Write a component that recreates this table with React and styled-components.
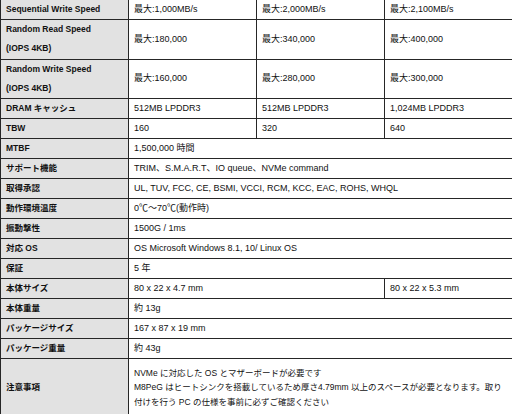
import styled, { createGlobalStyle } from 'styled-components';

const GlobalStyle = createGlobalStyle`
  html, body {
    margin: 0;
    padding: 0;
    background: #ffffff;
  }
  body {
    font-family: 'Liberation Sans', 'Noto Sans CJK JP', sans-serif;
    color: #111111;
  }
`;

const Page = styled.div`
  width: 512px;
  overflow: hidden;
`;

const Table = styled.table`
  width: 512px;
  margin-top: -1px;
  border-collapse: collapse;
  table-layout: fixed;
`;

const Row = styled.tr`
  height: ${(p) => p.$h || 19.8}px;
`;

const Label = styled.th`
  width: 128px;
  padding: 0 5px;
  background: #e2e2e2;
  border: 1px solid #262626;
  text-align: left;
  vertical-align: middle;
  font-size: 8.5px;
  font-weight: 700;
  line-height: 19px;
  white-space: nowrap;
`;

const Cell = styled.td`
  padding: 0 5px;
  border: 1px solid #262626;
  vertical-align: middle;
  font-size: ${(p) => (p.$dense ? '8.5px' : '9px')};
  line-height: ${(p) => (p.$dense ? '14.5px' : '19px')};
  white-space: nowrap;
`;

const Line = styled.div``;

const speeds = [
  { label: ['Sequential Write Speed'], vals: ['最大:1,000MB/s', '最大:2,000MB/s', '最大:2,100MB/s'], h: 20 },
  { label: ['Random Read Speed', '(IOPS 4KB)'], vals: ['最大:180,000', '最大:340,000', '最大:400,000'], h: 39.5 },
  { label: ['Random Write Speed', '(IOPS 4KB)'], vals: ['最大:160,000', '最大:280,000', '最大:300,000'], h: 39.5 },
  { label: ['DRAM キャッシュ'], vals: ['512MB LPDDR3', '512MB LPDDR3', '1,024MB LPDDR3'] },
  { label: ['TBW'], vals: ['160', '320', '640'] },
];

const common = [
  ['MTBF', '1,500,000 時間'],
  ['サポート機能', 'TRIM、S.M.A.R.T、IO queue、NVMe command'],
  ['取得承認', 'UL, TUV, FCC, CE, BSMI, VCCI, RCM, KCC, EAC, ROHS, WHQL'],
  ['動作環境温度', '0℃〜70℃(動作時)'],
  ['振動撃性', '1500G / 1ms'],
  ['対応 OS', 'OS Microsoft Windows 8.1, 10/ Linux OS'],
  ['保証', '5 年'],
];

const weights = [
  ['本体重量', '約 13g'],
  ['パッケージサイズ', '167 x 87 x 19 mm'],
  ['パッケージ重量', '約 43g'],
];

const notes = [
  'NVMe に対応した OS とマザーボードが必要です',
  'M8PeG はヒートシンクを搭載しているため厚さ4.79mm 以上のスペースが必要となります。取り',
  '付けを行う PC の仕様を事前に必ずご確認ください',
];

export default function App() {
  return (
    <Page>
      <GlobalStyle />
      <Table>
        <colgroup>
          <col style={{ width: 128 }} />
          <col style={{ width: 128 }} />
          <col style={{ width: 128 }} />
          <col style={{ width: 128 }} />
        </colgroup>
        <tbody>
          {speeds.map((r) => (
            <Row key={r.label[0]} $h={r.h}>
              <Label>
                {r.label.map((l) => (
                  <Line key={l}>{l}</Line>
                ))}
              </Label>
              {r.vals.map((v, i) => (
                <Cell key={i}>{v}</Cell>
              ))}
            </Row>
          ))}
          {common.map(([l, v]) => (
            <Row key={l}>
              <Label>{l}</Label>
              <Cell colSpan={3}>{v}</Cell>
            </Row>
          ))}
          <Row>
            <Label>本体サイズ</Label>
            <Cell colSpan={2}>80 x 22 x 4.7 mm</Cell>
            <Cell>80 x 22 x 5.3 mm</Cell>
          </Row>
          {weights.map(([l, v]) => (
            <Row key={l}>
              <Label>{l}</Label>
              <Cell colSpan={3}>{v}</Cell>
            </Row>
          ))}
          <Row $h={58}>
            <Label>注意事項</Label>
            <Cell colSpan={3} $dense>
              {notes.map((n) => (
                <Line key={n}>{n}</Line>
              ))}
            </Cell>
          </Row>
        </tbody>
      </Table>
    </Page>
  );
}
